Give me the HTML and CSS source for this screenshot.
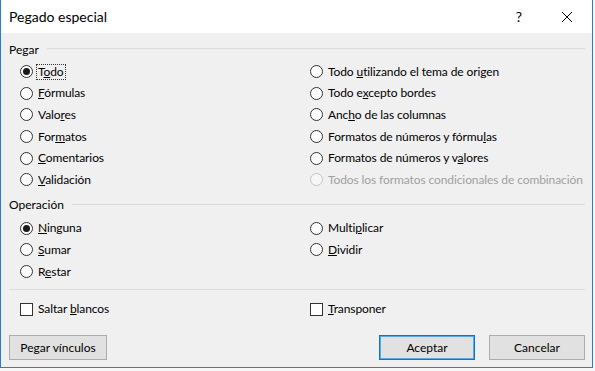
FILE: index.html
```html
<!DOCTYPE html>
<html lang="es">
<head>
    <meta charset="UTF-8">
    <title>Pegado especial</title>
    <link rel="stylesheet" href="styles.css">
</head>
<body>
    <div class="dialog">
        <div class="titlebar">
            <span class="title">Pegado especial</span>
            <span class="help">?</span>
            <span class="close">
                <svg width="12" height="12" viewBox="0 0 12 12"><path d="M1 1 L11 11 M11 1 L1 11" stroke="#000" stroke-width="1" fill="none"/></svg>
            </span>
        </div>
        <div class="content">
            <div class="legend"><span>Pegar</span><div class="rule"></div></div>
            <div class="grid">
                <div class="opt"><span class="radio on"></span><span class="label focus">T<u>o</u>do</span></div>
                <div class="opt"><span class="radio"></span><span class="label">Todo <u>u</u>tilizando el tema de origen</span></div>
                <div class="opt"><span class="radio"></span><span class="label"><u>F</u>órmulas</span></div>
                <div class="opt"><span class="radio"></span><span class="label">Todo e<u>x</u>cepto bordes</span></div>
                <div class="opt"><span class="radio"></span><span class="label">Valo<u>r</u>es</span></div>
                <div class="opt"><span class="radio"></span><span class="label">Anc<u>h</u>o de las columnas</span></div>
                <div class="opt"><span class="radio"></span><span class="label">For<u>m</u>atos</span></div>
                <div class="opt"><span class="radio"></span><span class="label">Formatos de números y fórmu<u>l</u>as</span></div>
                <div class="opt"><span class="radio"></span><span class="label"><u>C</u>omentarios</span></div>
                <div class="opt"><span class="radio"></span><span class="label">Formatos de números y v<u>a</u>lores</span></div>
                <div class="opt"><span class="radio"></span><span class="label"><u>V</u>alidación</span></div>
                <div class="opt disabled"><span class="radio"></span><span class="label">Todos los formatos condicionales de combinación</span></div>
            </div>

            <div class="legend op"><span>Operación</span><div class="rule"></div></div>
            <div class="grid">
                <div class="opt"><span class="radio on"></span><span class="label"><u>N</u>inguna</span></div>
                <div class="opt"><span class="radio"></span><span class="label">Multi<u>p</u>licar</span></div>
                <div class="opt"><span class="radio"></span><span class="label"><u>S</u>umar</span></div>
                <div class="opt"><span class="radio"></span><span class="label"><u>D</u>ividir</span></div>
                <div class="opt"><span class="radio"></span><span class="label">R<u>e</u>star</span></div>
            </div>

            <div class="rule full"></div>

            <div class="grid">
                <div class="opt"><span class="check"></span><span class="label">Saltar <u>b</u>lancos</span></div>
                <div class="opt"><span class="check"></span><span class="label"><u>T</u>ransponer</span></div>
            </div>

            <div class="buttons">
                <button class="btn wide">Pegar vínculos</button>
                <div class="spacer"></div>
                <button class="btn primary">Aceptar</button>
                <button class="btn">Cancelar</button>
            </div>
        </div>
    </div>
</body>
</html>
```

FILE: styles.css
```css
body {
    margin: 0;
    padding: 0;
    background-color: #f7f7f7;
    font-family: Lato, "Segoe UI", "Liberation Sans", sans-serif;
    font-size: 12px;
    color: #000;
}
.dialog {
    width: 591px;
    height: 367px;
    border: 1px solid #2b7cd3;
    border-top: none;
    background-color: #f0f0f0;
    box-sizing: content-box;
}
.titlebar {
    height: 33px;
    background-color: #fff;
    display: flex;
    align-items: center;
    padding-left: 8px;
}
.title {
    font-size: 14px;
    flex: 1;
    margin-top: -1px;
}
.help {
    font-size: 14px;
    width: 20px;
    margin-right: 32px;
    text-align: center;
}
.close {
    width: 12px;
    margin-right: 19px;
    display: flex;
}
.content {
    padding: 0 7px 0 8px;
}
.legend {
    display: flex;
    align-items: center;
    height: 16px;
    margin-top: 8px;
    margin-bottom: 4px;
}
.legend span {
    margin-right: 8px;
}
.legend.op {
    margin-top: 6px;
    margin-bottom: 5px;
}
.rule {
    flex: 1;
    height: 1px;
    background-color: #dcdcdc;
    margin-top: -1px;
}
.rule.full {
    margin: 7px 0 8px;
}
.grid {
    display: grid;
    grid-template-columns: 290px 1fr;
    padding-left: 11px;
}
.opt {
    height: 21.6px;
    display: flex;
    align-items: center;
    white-space: nowrap;
}
.radio {
    width: 13px;
    height: 13px;
    box-sizing: border-box;
    border: 1px solid #333;
    border-radius: 50%;
    background-color: #fff;
    display: flex;
    align-items: center;
    justify-content: center;
    flex: none;
}
.radio.on::after {
    content: "";
    width: 7px;
    height: 7px;
    border-radius: 50%;
    background-color: #1a1a1a;
}
.check {
    width: 13px;
    height: 13px;
    box-sizing: border-box;
    border: 1px solid #333;
    background-color: #fff;
    flex: none;
}
.label {
    margin-left: 3px;
    padding: 0 1px;
    border: 1px dotted transparent;
    line-height: 14px;
    letter-spacing: -0.1px;
}
.label.focus {
    border-color: #333;
}
.opt.disabled .radio {
    border-color: #c4c4c4;
    background-color: #f7f7f7;
}
.opt.disabled .label {
    color: #a0a0a0;
}
.buttons {
    display: flex;
    margin-top: 15px;
}
.spacer {
    flex: 1;
}
.btn {
    font-family: inherit;
    font-size: 12px;
    width: 96px;
    height: 25px;
    background-color: #e1e1e1;
    border: 1px solid #adadad;
    color: #000;
    padding: 0;
    margin-left: 14px;
}
.btn.wide {
    width: 98px;
    margin-left: 0;
}
.btn.primary {
    border-color: #0078d7;
    box-shadow: inset 0 0 0 1px #5ba7e8;
}
```
